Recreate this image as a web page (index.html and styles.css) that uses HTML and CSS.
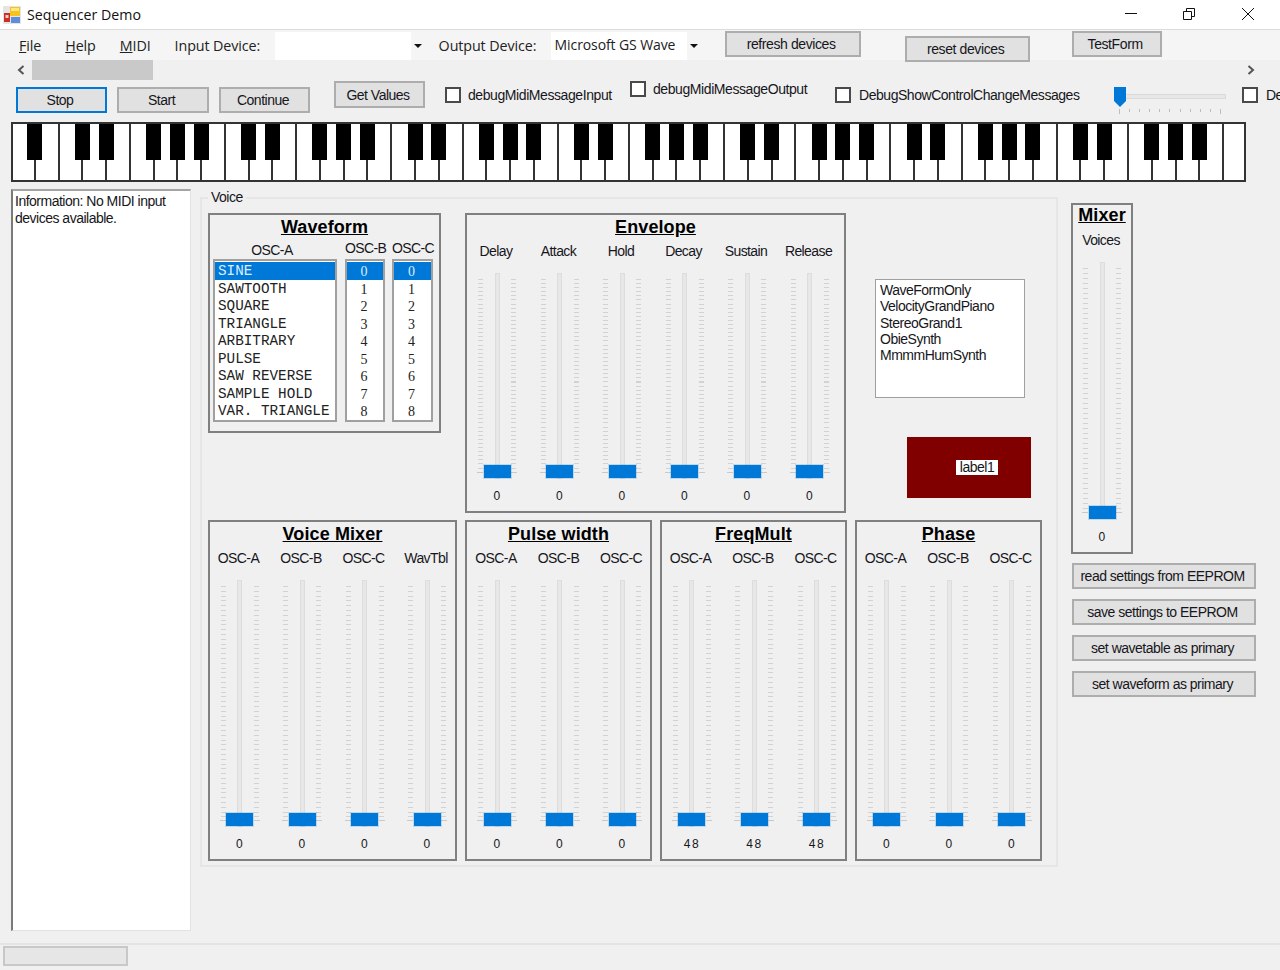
FILE: index.html
```html
<!DOCTYPE html>
<html lang="en">
<head>
<meta charset="utf-8">
<title>Sequencer Demo</title>
<link rel="stylesheet" href="styles.css">
</head>
<body>
<div class="app">
  <header class="titlebar">
    <svg class="appicon" width="18" height="18" viewBox="0 0 18 18">
      <rect x="0" y="0" width="18" height="18" fill="#e4e4e4"/>
      <rect x="1" y="7" width="6" height="9" fill="#c9302a"/>
      <rect x="2.5" y="9" width="3" height="3" fill="#f2d0c0"/>
      <rect x="7" y="1" width="10" height="9" fill="#f6c21c"/>
      <rect x="8" y="2" width="8" height="3" fill="#fde58a"/>
      <rect x="8" y="11" width="9" height="6" fill="#5d8fd8"/>
    </svg>
    <span class="title">Sequencer Demo</span>
    <div class="winbtns">
      <svg class="winbtn minimize" width="14" height="14" viewBox="0 0 14 14"><path d="M1 6.5H13" stroke="#111" fill="none"/></svg>
      <svg class="winbtn restore" width="14" height="14" viewBox="0 0 14 14"><path d="M1.5 4.5H9.5V12.5H1.5ZM4.5 4.5V1.5H12.5V9.5H9.5" stroke="#111" fill="none"/></svg>
      <svg class="winbtn close" width="14" height="14" viewBox="0 0 14 14"><path d="M1 1L13 13M13 1L1 13" stroke="#111" fill="none"/></svg>
    </div>
  </header>

  <nav class="menustrip">
    <span class="menu m-file"><u>F</u>ile</span>
    <span class="menu m-help"><u>H</u>elp</span>
    <span class="menu m-midi"><u>M</u>IDI</span>
    <span class="menu m-input">Input Device:</span>
    <div class="combo c-input"><span class="combo-text"></span><span class="combo-arrow"></span></div>
    <span class="menu m-output">Output Device:</span>
    <div class="combo c-output"><span class="combo-text">Microsoft GS Wave</span><span class="combo-arrow"></span></div>
    <button class="btn b-refresh">refresh devices</button>
    <button class="btn b-reset">reset devices</button>
    <button class="btn b-test">TestForm</button>
  </nav>

  <div class="hscroll">
    <svg class="arrow" width="8" height="10" viewBox="0 0 8 10"><path d="M6.5 1L2 5L6.5 9" stroke="#555" stroke-width="2" fill="none"/></svg>
    <div class="hthumb"></div>
    <svg class="arrow arrow-r" width="8" height="10" viewBox="0 0 8 10"><path d="M1.5 1L6 5L1.5 9" stroke="#555" stroke-width="2" fill="none"/></svg>
  </div>

  <div class="toolbar">
    <button class="btn b-stop">Stop</button>
    <button class="btn b-start">Start</button>
    <button class="btn b-cont">Continue</button>
    <button class="btn b-get">Get Values</button>
    <label class="check k1"><span class="box"></span><span>debugMidiMessageInput</span></label>
    <label class="check k2"><span class="box"></span><span>debugMidiMessageOutput</span></label>
    <label class="check k3"><span class="box"></span><span>DebugShowControlChangeMessages</span></label>
    <div class="hslider">
      <div class="hslider-track"></div>
      <svg class="hslider-thumb" width="12" height="20" viewBox="0 0 12 20"><path d="M0 0H12V14L6 20L0 14Z" fill="#0078d7"/></svg>
      <div class="hslider-ticks"><i class="long"></i><i></i><i></i><i></i><i></i><i></i><i></i><i></i><i></i><i></i><i class="long"></i></div>
    </div>
    <label class="check k4"><span class="box"></span><span>De</span></label>
  </div>

  <div class="piano">
    <div class="key s"></div><div class="key"></div>
    <div class="key s"></div><div class="key s"></div><div class="key"></div><div class="key s"></div><div class="key s"></div><div class="key s"></div><div class="key"></div>
    <div class="key s"></div><div class="key s"></div><div class="key"></div><div class="key s"></div><div class="key s"></div><div class="key s"></div><div class="key"></div>
    <div class="key s"></div><div class="key s"></div><div class="key"></div><div class="key s"></div><div class="key s"></div><div class="key s"></div><div class="key"></div>
    <div class="key s"></div><div class="key s"></div><div class="key"></div><div class="key s"></div><div class="key s"></div><div class="key s"></div><div class="key"></div>
    <div class="key s"></div><div class="key s"></div><div class="key"></div><div class="key s"></div><div class="key s"></div><div class="key s"></div><div class="key"></div>
    <div class="key s"></div><div class="key s"></div><div class="key"></div><div class="key s"></div><div class="key s"></div><div class="key s"></div><div class="key"></div>
    <div class="key s"></div><div class="key s"></div><div class="key"></div><div class="key s"></div><div class="key s"></div><div class="key s"></div><div class="key"></div>
    <div class="key"></div>
  </div>

  <main class="workspace">
    <div class="log">Information: No MIDI input devices available.</div>

    <section class="voice">
      <span class="voice-legend">Voice</span>
      <div class="voice-row">
        <div class="panel waveform">
          <h2 class="heading">Waveform</h2>
          <div class="lists">
            <div class="listcol col-a">
              <div class="listlabel la">OSC-A</div>
              <ul class="list">
                <li class="sel">SINE</li><li>SAWTOOTH</li><li>SQUARE</li><li>TRIANGLE</li><li>ARBITRARY</li><li>PULSE</li><li>SAW REVERSE</li><li>SAMPLE HOLD</li><li>VAR. TRIANGLE</li>
              </ul>
            </div>
            <div class="listcol col-b">
              <div class="listlabel">OSC-B</div>
              <ul class="list nums">
                <li class="sel">0</li><li>1</li><li>2</li><li>3</li><li>4</li><li>5</li><li>6</li><li>7</li><li>8</li>
              </ul>
            </div>
            <div class="listcol col-c">
              <div class="listlabel">OSC-C</div>
              <ul class="list nums">
                <li class="sel">0</li><li>1</li><li>2</li><li>3</li><li>4</li><li>5</li><li>6</li><li>7</li><li>8</li>
              </ul>
            </div>
          </div>
        </div>

        <div class="panel envelope">
          <h2 class="heading">Envelope</h2>
          <div class="faders">
            <div class="fader"><div class="f-label">Delay</div><div class="slot up"><div class="track"></div><div class="thumb"></div></div><div class="f-value">0</div></div>
            <div class="fader"><div class="f-label">Attack</div><div class="slot up"><div class="track"></div><div class="thumb"></div></div><div class="f-value">0</div></div>
            <div class="fader"><div class="f-label">Hold</div><div class="slot up"><div class="track"></div><div class="thumb"></div></div><div class="f-value">0</div></div>
            <div class="fader"><div class="f-label">Decay</div><div class="slot up"><div class="track"></div><div class="thumb"></div></div><div class="f-value">0</div></div>
            <div class="fader"><div class="f-label">Sustain</div><div class="slot up"><div class="track"></div><div class="thumb"></div></div><div class="f-value">0</div></div>
            <div class="fader"><div class="f-label">Release</div><div class="slot up"><div class="track"></div><div class="thumb"></div></div><div class="f-value">0</div></div>
          </div>
        </div>

        <div class="sidecol">
          <ul class="presets">
            <li>WaveFormOnly</li><li>VelocityGrandPiano</li><li>StereoGrand1</li><li>ObieSynth</li><li>MmmmHumSynth</li>
          </ul>
          <div class="redbox"><span class="redlabel">label1</span></div>
        </div>
      </div>

      <div class="voice-row row2">
        <div class="panel vmix">
          <h2 class="heading">Voice Mixer</h2>
          <div class="faders">
            <div class="fader"><div class="f-label">OSC-A</div><div class="slot low"><div class="track"></div><div class="thumb"></div></div><div class="f-value">0</div></div>
            <div class="fader"><div class="f-label">OSC-B</div><div class="slot low"><div class="track"></div><div class="thumb"></div></div><div class="f-value">0</div></div>
            <div class="fader"><div class="f-label">OSC-C</div><div class="slot low"><div class="track"></div><div class="thumb"></div></div><div class="f-value">0</div></div>
            <div class="fader"><div class="f-label">WavTbl</div><div class="slot low"><div class="track"></div><div class="thumb"></div></div><div class="f-value">0</div></div>
          </div>
        </div>
        <div class="panel trio pw">
          <h2 class="heading">Pulse width</h2>
          <div class="faders">
            <div class="fader"><div class="f-label">OSC-A</div><div class="slot low"><div class="track"></div><div class="thumb"></div></div><div class="f-value">0</div></div>
            <div class="fader"><div class="f-label">OSC-B</div><div class="slot low"><div class="track"></div><div class="thumb"></div></div><div class="f-value">0</div></div>
            <div class="fader"><div class="f-label">OSC-C</div><div class="slot low"><div class="track"></div><div class="thumb"></div></div><div class="f-value">0</div></div>
          </div>
        </div>
        <div class="panel trio">
          <h2 class="heading">FreqMult</h2>
          <div class="faders">
            <div class="fader"><div class="f-label">OSC-A</div><div class="slot low"><div class="track"></div><div class="thumb"></div></div><div class="f-value">48</div></div>
            <div class="fader"><div class="f-label">OSC-B</div><div class="slot low"><div class="track"></div><div class="thumb"></div></div><div class="f-value">48</div></div>
            <div class="fader"><div class="f-label">OSC-C</div><div class="slot low"><div class="track"></div><div class="thumb"></div></div><div class="f-value">48</div></div>
          </div>
        </div>
        <div class="panel trio">
          <h2 class="heading">Phase</h2>
          <div class="faders">
            <div class="fader"><div class="f-label">OSC-A</div><div class="slot low"><div class="track"></div><div class="thumb"></div></div><div class="f-value">0</div></div>
            <div class="fader"><div class="f-label">OSC-B</div><div class="slot low"><div class="track"></div><div class="thumb"></div></div><div class="f-value">0</div></div>
            <div class="fader"><div class="f-label">OSC-C</div><div class="slot low"><div class="track"></div><div class="thumb"></div></div><div class="f-value">0</div></div>
          </div>
        </div>
      </div>
    </section>

    <aside class="rightcol">
      <div class="panel mixer">
        <h2 class="heading">Mixer</h2>
        <div class="fader"><div class="f-label">Voices</div><div class="slot mix"><div class="track"></div><div class="thumb"></div></div><div class="f-value">0</div></div>
      </div>
      <div class="actions">
        <button class="btn action">read settings from EEPROM</button>
        <button class="btn action">save settings to EEPROM</button>
        <button class="btn action">set wavetable as primary</button>
        <button class="btn action">set waveform as primary</button>
      </div>
    </aside>
  </main>

  <footer class="statusbar"><div class="progress"></div></footer>
</div>
</body>
</html>
```
FILE: styles.css
```css
* { box-sizing: border-box; }
html, body { margin: 0; padding: 0; height: 100%; overflow: hidden; }
body { background: #f0f0f0; color: #161620; font-family: "Liberation Sans", Arial, sans-serif; font-size: 14px; letter-spacing: -0.5px; }
ul { list-style: none; margin: 0; padding: 0; }
h2 { margin: 0; }

.app { width: 1280px; height: 970px; display: flex; flex-direction: column; overflow: hidden; }

/* title bar */
.titlebar { flex: none; height: 30px; background: #fff; border-bottom: 1px solid #dcdcdc; display: flex; align-items: center; padding-left: 3px; }
.appicon { flex: none; }
.title { font-family: "Open Sans", sans-serif; font-size: 14.2px; letter-spacing: 0; margin-left: 6px; color: #111; }
.winbtns { margin-left: auto; display: flex; align-self: flex-start; margin-top: 7px; }
.winbtn { flex: none; }
.restore { margin-left: 44px; }
.close { margin-left: 45px; margin-right: 25px; }

/* menu strip */
.menustrip { flex: none; height: 30px; background: #f5f5f5; display: flex; align-items: flex-start; font-family: "Open Sans", sans-serif; letter-spacing: -0.1px; }
.menu { flex: none; font-size: 14.3px; line-height: 31px; color: #222; }
.m-file { margin-left: 19px; }
.m-help { margin-left: 24px; }
.m-midi { margin-left: 24px; }
.m-input { margin-left: 24px; width: 100px; }
.m-output { margin-left: 14px; width: 112px; }
.combo { flex: none; margin-top: 2px; height: 28px; background: #fff; display: flex; align-items: center; }
.c-input { width: 150px; }
.c-output { width: 151px; }
.combo-text { flex: 1; min-width: 0; padding-left: 4px; white-space: nowrap; font-size: 14px; color: #222; align-self: stretch; line-height: 25px; }
.combo-arrow { flex: none; width: 15px; height: 100%; background: #f5f5f5; position: relative; }
.c-input .combo-arrow { width: 14px; }
.combo-arrow::after { content: ""; position: absolute; left: 50%; top: 12px; margin-left: -4px; border: 4px solid transparent; border-top-color: #111; border-bottom: 0; }

/* buttons */
.btn { flex: none; font: inherit; color: inherit; letter-spacing: inherit; background: #e1e1e1; border: 2px solid #adadad; padding: 0 3px 0 0; margin: 0; white-space: nowrap; }
.menustrip .btn { font-family: "Liberation Sans", sans-serif; font-size: 14px; letter-spacing: -0.4px; }
.b-refresh { margin: 1px 0 0 23px; width: 136px; height: 26px; }
.b-reset { margin: 6px 0 0 44px; width: 125px; height: 26px; }
.b-test { margin: 1px 0 0 42px; width: 90px; height: 26px; }

/* horizontal scroll */
.hscroll { flex: none; height: 20px; display: flex; align-items: center; padding-left: 17px; }
.hscroll .arrow { flex: none; }
.hthumb { flex: none; margin-left: 7px; width: 121px; height: 20px; background: #c9c9c9; }
.arrow-r { margin-left: 1094px; }

/* toolbar */
.toolbar { flex: none; height: 42px; display: flex; align-items: flex-start; padding-left: 16px; white-space: nowrap; }
.b-stop { margin-top: 7px; width: 91px; height: 26px; border-color: #0078d7; }
.b-start { margin: 7px 0 0 10px; width: 92px; height: 26px; }
.b-cont { margin: 7px 0 0 10px; width: 91px; height: 26px; }
.b-get { margin: 1px 0 0 24px; width: 91px; height: 27px; }
.check { flex: none; display: flex; align-items: center; gap: 7px; height: 16px; }
.box { flex: none; width: 16px; height: 16px; border: 2px solid #4a4a4a; background: #fff; }
.k1 { margin: 7px 0 0 20px; width: 168px; letter-spacing: -0.42px; }
.k2 { margin: 1px 0 0 17px; width: 178px; letter-spacing: -0.42px; }
.k3 { margin: 7px 0 0 27px; width: 245px; gap: 8px; letter-spacing: -0.46px; }
.k4 { margin: 7px 0 0 16px; gap: 8px; }
.hslider { flex: none; margin: 7px 0 0 34px; width: 112px; height: 28px; position: relative; }
.hslider-track { margin-top: 7px; height: 5px; background: #e7e7e7; border: 1px solid #dadada; }
.hslider-thumb { position: absolute; left: 0; top: 0; }
.hslider-ticks { position: absolute; left: 5px; right: 5px; top: 22px; height: 5px; display: flex; justify-content: space-between; }
.hslider-ticks i { display: block; width: 1px; height: 3px; background: #bdbdbd; }
.hslider-ticks i.long { height: 5px; }

/* piano */
.piano { flex: none; margin-left: 11px; width: 1235px; height: 60px; background: #fff; border-top: 2px solid #333; border-bottom: 2px solid #333; display: flex; padding-left: 1px; box-shadow: inset 2px 0 0 #333, inset -2px 0 0 #333; }
.key { flex: 1 1 0; min-width: 0; border-right: 2px solid #333; position: relative; }
.key:last-child { border-right: 0; }
.key.s::after { content: ""; position: absolute; right: -8.5px; top: 0; width: 15px; height: 36px; background: #000; }

/* workspace */
.workspace { flex: none; display: flex; align-items: flex-start; margin-top: 7px; }
.log { flex: none; margin-left: 11px; width: 180px; height: 742px; background: #fff; border-style: solid; border-width: 2px 1px 1px 2px; border-color: #a4a4a4 #e2e2e2 #e2e2e2 #7a7a7a; padding: 2px 2px; line-height: 17px; }

.voice { flex: none; margin: 8px 0 0 9px; width: 858px; height: 670px; border: 2px solid #e6e6e6; padding: 14px 0 0 6px; position: relative; }
.voice-legend { position: absolute; left: 6px; top: -10px; padding: 0 3px; background: #f0f0f0; line-height: 17px; }
.voice-row { display: flex; align-items: flex-start; }
.row2 { margin-top: 7px; gap: 8px; }

.panel { flex: none; box-shadow: inset 0 0 0 2px #808080; padding-top: 4px; }
.heading { font-size: 18px; font-weight: 700; letter-spacing: 0.1px; text-decoration: underline; text-align: center; line-height: 20px; height: 20px; color: #000; }

/* waveform */
.waveform { width: 233px; height: 220px; }
.lists { display: flex; padding-left: 5px; margin-top: 1px; }
.listcol { flex: none; }
.col-a { width: 124px; }
.col-b { width: 40px; margin-left: 8px; }
.col-c { width: 41px; margin-left: 7px; }
.listlabel { height: 21px; line-height: 21px; text-align: center; white-space: nowrap; letter-spacing: -0.6px; }
.listlabel.la { padding: 3px 6px 0 0; line-height: 18px; }
.list { height: 163px; background: #fff; border: 2px solid #a0a0a0; padding-top: 1px; font-family: "Liberation Mono", monospace; font-size: 14.3px; letter-spacing: 0; }
.list li { height: 17.5px; line-height: 19.5px; padding-left: 3px; white-space: nowrap; color: #222; }
.list li.sel { background: #0078d7; color: #dcecff; }
.nums { font-family: "Liberation Serif", serif; font-size: 14px; }
.nums li { padding: 0 2px 0 0; text-align: center; }

/* envelope + faders */
.envelope { margin-left: 24px; width: 381px; height: 300px; }
.faders { display: flex; padding-left: 0.25px; }
.envelope .faders, .pw .faders { padding-left: 0.75px; }
.vmix { width: 249px; height: 341px; }
.trio { width: 187px; height: 341px; }
.fader { flex: none; width: 62.5px; display: flex; flex-direction: column; align-items: center; }
.f-label { margin-top: 4px; height: 20px; line-height: 20px; white-space: nowrap; letter-spacing: -0.6px; padding-right: 2px; }
.slot { margin-top: 12px; width: 40px; position: relative; --period: 4.1px; }
.slot::before, .slot::after { content: ""; position: absolute; top: 6px; bottom: 6px; width: 6px; background: linear-gradient(#c8c8c8, #c8c8c8) 0 100% / 100% 1px no-repeat, repeating-linear-gradient(to bottom, #d2d2d2 0, #d2d2d2 1px, transparent 1px, transparent var(--period)) 1px 0 / 5px 100% no-repeat; }
.slot::before { left: 0; }
.slot::after { right: 0; transform: scaleX(-1); }
.up { height: 206px; }
.low { height: 247px; --period: 4.8px; }
.mix { height: 257px; --period: 5px; }
.track { position: absolute; left: 17.5px; top: 0; bottom: 0; width: 5px; background: #e7e7e7; border: 1px solid #dddddd; }
.thumb { position: absolute; left: 6.5px; bottom: 1px; width: 27px; height: 13px; background: #0078d7; box-shadow: 0 0 0 1px rgba(0, 120, 215, 0.2); z-index: 1; }
.mix .thumb { bottom: 0; }
.f-value { margin-top: 9px; height: 17px; line-height: 17px; font-family: "Liberation Sans", sans-serif; font-size: 12px; letter-spacing: 1.5px; padding-left: 1px; }

/* side column */
.sidecol { flex: none; margin-left: 29px; padding-top: 66px; }
.presets { width: 150px; height: 119px; background: #fff; border: 1px solid #a0a0a0; padding: 2px 4px; line-height: 16.3px; }
.redbox { margin: 39px 0 0 32px; width: 124px; height: 61px; background: #800000; display: flex; align-items: center; justify-content: center; padding-left: 16px; }
.redlabel { background: #fff; padding: 0 4px; line-height: 15px; }

/* right column */
.rightcol { flex: none; margin: 14px 0 0 13px; }
.mixer { width: 62px; height: 351px; padding-top: 2px; }
.mixer .f-label { margin-top: 5px; }
.mixer .fader { width: 62px; }
.mixer .f-value { margin-top: 10px; }
.actions { margin: 9px 0 0 1px; display: flex; flex-direction: column; gap: 10px; }
.action { width: 184px; height: 26px; }

/* status bar */
.statusbar { flex: none; margin-top: auto; height: 27px; border-top: 2px solid #e4e4e4; padding: 1px 0 0 3px; }
.progress { width: 125px; height: 20px; background: #e6e6e6; border: 2px solid #c8c8c8; }
```
